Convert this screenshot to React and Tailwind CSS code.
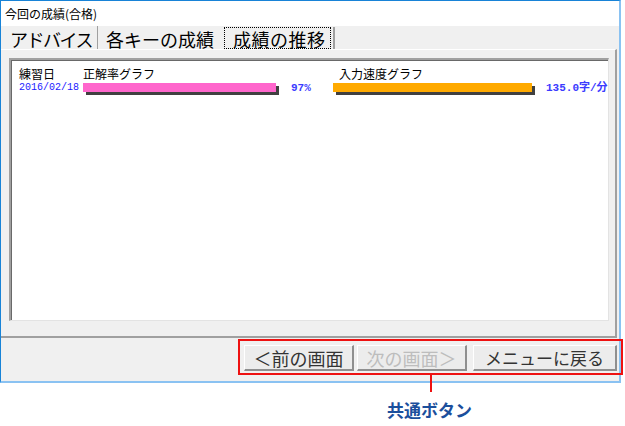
const Button = ({ children, disabled, className = '' }) => (
  <div
    className={`h-[26px] flex items-center justify-center leading-none whitespace-nowrap bg-[#ececec] border-t border-l border-t-white border-l-white border-r-2 border-b-2 border-r-[#8f8f8f] border-b-[#8f8f8f] ${
      disabled ? 'text-[#bdbdbd]' : 'text-[#333333]'
    } ${className}`}
  >
    {children}
  </div>
);

const App = () => {
  return (
    <div className="relative w-[625px] h-[426px] bg-white font-['Noto_Sans_CJK_JP',sans-serif] text-black overflow-hidden">
      {/* window frame */}
      <div className="flex flex-col w-[621px] h-[383px] border-t border-l border-t-[#1883d7] border-l-[#1883d7] border-r-2 border-b-2 border-r-[#8ac2f2] border-b-[#8ac2f2]">
        <div className="h-[25px] shrink-0 flex items-center pl-[4px] text-[12px] leading-none bg-white">
          今回の成績(合格)
        </div>

        <div className="flex-1 flex flex-col bg-[#f0f0f0]">
          {/* tabs */}
          <div className="h-[23px] shrink-0 flex pl-[9px] text-[18px] leading-[20px] whitespace-nowrap">
            <div className="w-[88px] pt-[3px] tracking-[-1.5px] border-r border-r-[#a0a0a0]">アドバイス</div>
            <div className="w-[126px] pl-[8px] pt-[3px]">各キーの成績</div>
            <div className="flex">
              <div className="w-[107px] h-[22px] mt-[1px] border border-dotted border-black pl-[8px] pt-[1px] tracking-[0.5px]">
                成績の推移
              </div>
              <div className="w-[2px] ml-[2px] mt-[1px] bg-[#a0a0a0]" />
            </div>
          </div>

          {/* tab page */}
          <div className="w-[616px] h-[289px] shrink-0 border-t border-t-white border-r-2 border-b-2 border-r-[#a0a0a0] border-b-[#a0a0a0] pl-[8px] pt-[8px]">
            <div className="w-[600px] h-[263px] bg-white border-t-2 border-l-2 border-t-[#a0a0a0] border-l-[#a0a0a0] border-r border-b border-r-[#e3e3e3] border-b-[#e3e3e3] shadow-[inset_1px_1px_0_#696969] pl-[8px] pt-[7px]">
              <div className="flex text-[12px] leading-[14px] whitespace-nowrap">
                <div className="w-[64px]">練習日</div>
                <div className="w-[256px]">正解率グラフ</div>
                <div>入力速度グラフ</div>
              </div>
              <div className="flex items-start h-[14px] whitespace-nowrap font-['Liberation_Mono','Noto_Sans_CJK_JP',monospace]">
                <div className="w-[64px] text-[10px] leading-[14px] text-[#1a1aff]">2016/02/18</div>
                <div className="w-[208px] pt-[2px]">
                  <div className="w-[193px] h-[9px] bg-[#ff66cc] shadow-[3px_3px_0_#404040]" />
                </div>
                <div className="w-[42px] text-[11px] leading-[14px] font-bold text-[#3b3bff]">97%</div>
                <div className="w-[213px] pt-[2px]">
                  <div className="w-[199px] h-[9px] bg-[#ffaa00] shadow-[3px_3px_0_#404040]" />
                </div>
                <div className="text-[11px] leading-[14px] font-bold text-[#3b3bff]">135.0字/分</div>
              </div>
            </div>
          </div>

          {/* common buttons */}
          <div className="flex justify-end pt-[7px] pr-[2px]">
            <Button className="w-[110px] text-[18px]">＜前の画面</Button>
            <Button disabled className="w-[110px] ml-[3px] text-[18px]">次の画面＞</Button>
            <Button className="w-[144px] ml-[6px] text-[17px]">メニューに戻る</Button>
          </div>
        </div>
      </div>

      {/* annotation */}
      <div className="absolute left-[238px] top-[339px] w-[385px] h-[36px] border-2 border-[#ee1111]" />
      <div className="absolute left-[430px] top-[375px] w-[2px] h-[17px] bg-[#ee1111]" />
      <div className="mt-[17px] pl-[387px] text-[17px] leading-[20px] font-bold text-[#1b4f9c] whitespace-nowrap">
        共通ボタン
      </div>
    </div>
  );
};

export default App;
